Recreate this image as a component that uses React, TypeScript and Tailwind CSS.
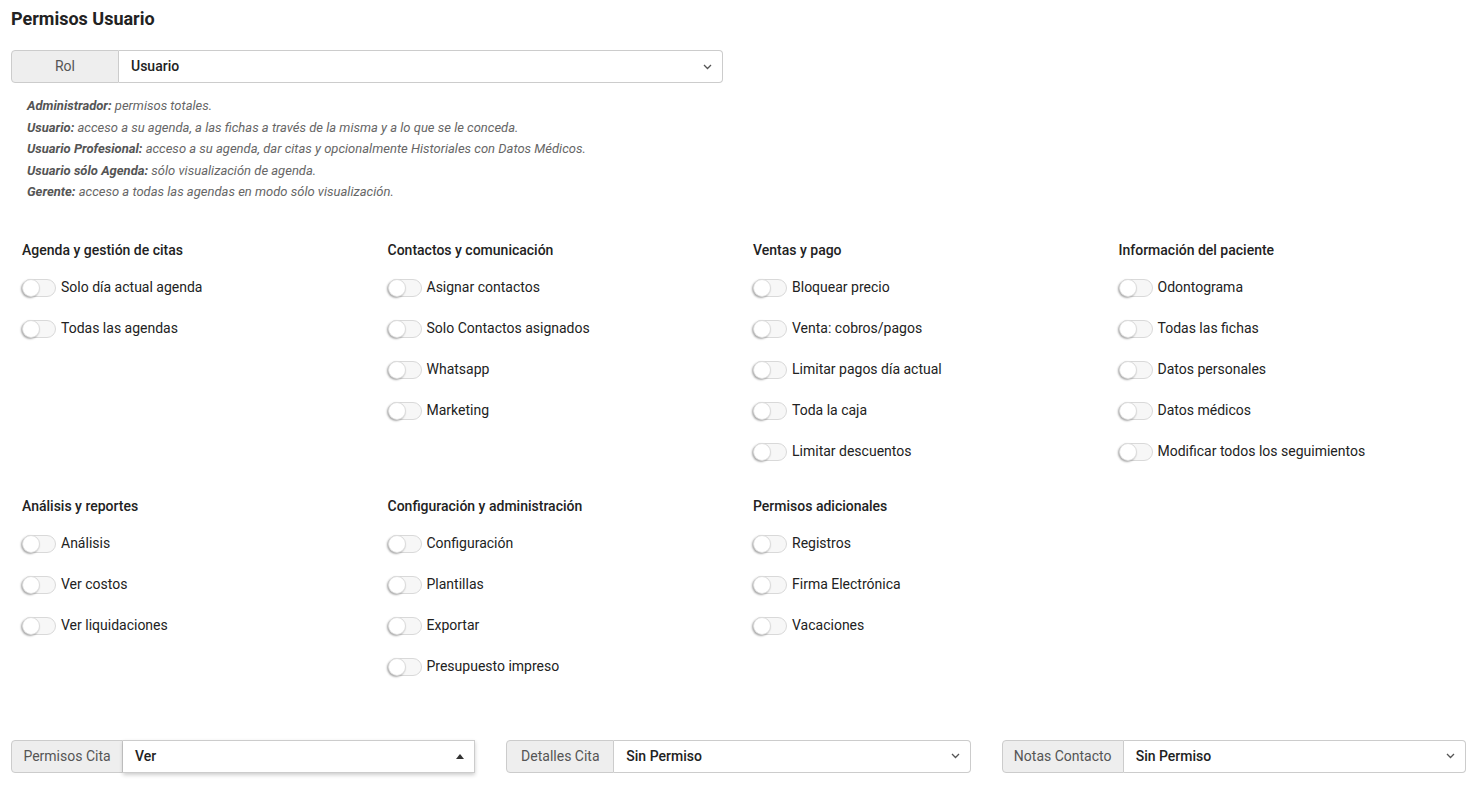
import React from 'react'

const font = { fontFamily: 'Roboto, "Liberation Sans", sans-serif' }

function Chevron() {
  return (
    <svg width="9" height="6" viewBox="0 0 9 6" className="text-[#555]">
      <path d="M1 1l3.5 3.5L8 1" fill="none" stroke="currentColor" strokeWidth="1.3" />
    </svg>
  )
}

function Toggle() {
  return (
    <div className="relative h-[18px] w-[34px] shrink-0 rounded-full border border-[#d9d9d9] bg-[#f7f7f7]">
      <div className="absolute left-[-1px] top-[-1px] h-[18px] w-[18px] rounded-full border border-[#dcdcdc] bg-white shadow-[-1px_1px_2px_rgba(0,0,0,0.35)]" />
    </div>
  )
}

function Group({ title, items }: { title: string; items: string[] }) {
  return (
    <div className="px-[11px]">
      <div className="mb-[21px] text-[14px] font-medium leading-4 text-[#222]">{title}</div>
      <div className="flex flex-col gap-[23px]">
        {items.map(i => (
          <div key={i} className="flex h-[18px] items-center gap-[5px]">
            <Toggle />
            <span className="text-[14px] text-[#222]">{i}</span>
          </div>
        ))}
      </div>
    </div>
  )
}

function InputGroup({ label, value, labelW, open }: { label: string; value: string; labelW: string; open?: boolean }) {
  return (
    <div className="flex h-[33px]">
      <div className={`flex items-center justify-center rounded-l-[4px] border border-[#ccc] bg-[#eee] text-[14px] text-[#555] ${labelW}`}>
        {label}
      </div>
      <div
        className={`flex flex-1 items-center justify-between border border-l-0 pl-[12px] pr-[10px] text-[14px] font-medium text-[#222] ${open ? 'rounded-none border-[#ccc] shadow-[0_2px_4px_rgba(0,0,0,0.2)]' : 'rounded-r-[4px] border-[#ccc]'}`}
      >
        <span>{value}</span>
        {open ? (
          <svg width="8" height="5" viewBox="0 0 8 5"><path d="M0 5L4 0l4 5z" fill="#333" /></svg>
        ) : (
          <Chevron />
        )}
      </div>
    </div>
  )
}

const groupsTop = [
  { title: 'Agenda y gestión de citas', items: ['Solo día actual agenda', 'Todas las agendas'] },
  { title: 'Contactos y comunicación', items: ['Asignar contactos', 'Solo Contactos asignados', 'Whatsapp', 'Marketing'] },
  { title: 'Ventas y pago', items: ['Bloquear precio', 'Venta: cobros/pagos', 'Limitar pagos día actual', 'Toda la caja', 'Limitar descuentos'] },
  { title: 'Información del paciente', items: ['Odontograma', 'Todas las fichas', 'Datos personales', 'Datos médicos', 'Modificar todos los seguimientos'] },
]

const groupsBottom = [
  { title: 'Análisis y reportes', items: ['Análisis', 'Ver costos', 'Ver liquidaciones'] },
  { title: 'Configuración y administración', items: ['Configuración', 'Plantillas', 'Exportar', 'Presupuesto impreso'] },
  { title: 'Permisos adicionales', items: ['Registros', 'Firma Electrónica', 'Vacaciones'] },
]

const roles = [
  ['Administrador:', 'permisos totales.'],
  ['Usuario:', 'acceso a su agenda, a las fichas a través de la misma y a lo que se le conceda.'],
  ['Usuario Profesional:', 'acceso a su agenda, dar citas y opcionalmente Historiales con Datos Médicos.'],
  ['Usuario sólo Agenda:', 'sólo visualización de agenda.'],
  ['Gerente:', 'acceso a todas las agendas en modo sólo visualización.'],
]

export default function App() {
  return (
    <div style={font} className="min-h-[791px] bg-white px-[11px] pt-[8px] text-[#222]">
      <h1 className="text-[18px] font-bold leading-[22px]">Permisos Usuario</h1>

      <div className="mt-[20px] w-[712px]">
        <InputGroup label="Rol" value="Usuario" labelW="w-[108px]" />
      </div>

      <div className="mt-[12px] pl-[16px] text-[13px] italic leading-[21.5px] text-[#666]">
        {roles.map(([b, t]) => (
          <div key={b}>
            <span className="font-bold text-[#555]">{b}</span> {t}
          </div>
        ))}
      </div>

      <div className="mt-[39px] grid grid-cols-4">
        {groupsTop.map(g => (
          <Group key={g.title} {...g} />
        ))}
      </div>

      <div className="mt-[37px] grid grid-cols-4">
        {groupsBottom.map(g => (
          <Group key={g.title} {...g} />
        ))}
      </div>

      <div className="mt-[64px] grid w-[1455px] grid-cols-3 gap-x-[31px]">
        <InputGroup label="Permisos Cita" value="Ver" labelW="w-[112px]" open />
        <InputGroup label="Detalles Cita" value="Sin Permiso" labelW="w-[108px]" />
        <InputGroup label="Notas Contacto" value="Sin Permiso" labelW="w-[122px]" />
      </div>
    </div>
  )
}
